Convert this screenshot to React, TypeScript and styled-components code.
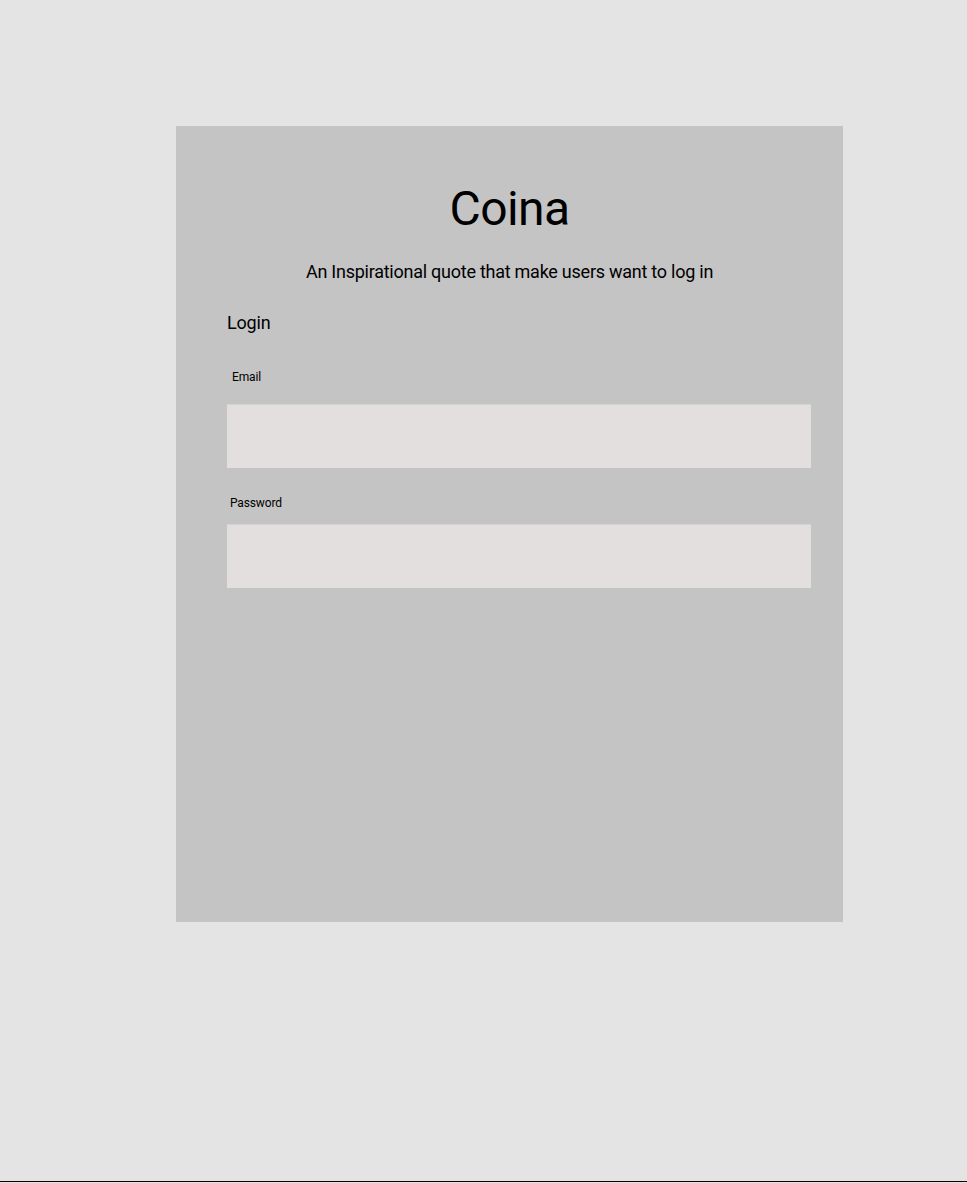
import React from "react"
import styled, { createGlobalStyle } from "styled-components"

const GlobalStyle = createGlobalStyle`
  html, body {
    margin: 0;
    padding: 0;
    background: #e4e4e4;
    font-family: Roboto, "Liberation Sans", sans-serif;
    color: #000;
  }
`

const Page = styled.div`
  height: 1182px;
  border-bottom: 1px solid #000;
  background: #e4e4e4;
  padding: 126px 0 0 176px;
  box-sizing: border-box;
`

const Card = styled.div`
  width: 667px;
  height: 796px;
  background: #c4c4c4;
  box-sizing: border-box;
  padding: 55px 32px 0 51px;
  display: flex;
  flex-direction: column;
`

const Title = styled.h1`
  margin: 0 -32px 0 -51px;
  font-size: 48px;
  font-weight: 400;
  line-height: 56px;
  letter-spacing: -0.6px;
  text-align: center;
`

const Quote = styled.p`
  margin: 24px -32px 0 -51px;
  font-size: 18px;
  line-height: 21px;
  letter-spacing: -0.25px;
  text-align: center;
`

const Heading = styled.h2`
  margin: 30px 0 0;
  font-size: 18px;
  font-weight: 400;
  line-height: 21px;
  letter-spacing: -0.2px;
`

const Field = styled.div<{ $gap: number }>`
  display: flex;
  flex-direction: column;
  margin-top: ${({ $gap }) => $gap}px;
`

const Label = styled.label<{ $indent: number; $space: number }>`
  font-size: 12px;
  line-height: 14px;
  letter-spacing: -0.15px;
  padding-left: ${({ $indent }) => $indent}px;
  margin-bottom: ${({ $space }) => $space}px;
`

const Input = styled.input`
  height: 64px;
  width: 100%;
  box-sizing: border-box;
  background: #e2dfde;
  border: none;
  border-top: 1px solid #d6d3d3;
  outline: none;
  padding: 0 12px;
  font: inherit;
`

export default function App() {
  return (
    <>
      <GlobalStyle />
      <Page>
        <Card>
          <Title>Coina</Title>
          <Quote>An Inspirational quote that make users want to log in</Quote>
          <Heading>Login</Heading>
          <Field $gap={37}>
            <Label $indent={5} $space={20} htmlFor="email">Email</Label>
            <Input id="email" type="email" />
          </Field>
          <Field $gap={28}>
            <Label $indent={3} $space={14} htmlFor="password">Password</Label>
            <Input id="password" type="password" />
          </Field>
        </Card>
      </Page>
    </>
  )
}
